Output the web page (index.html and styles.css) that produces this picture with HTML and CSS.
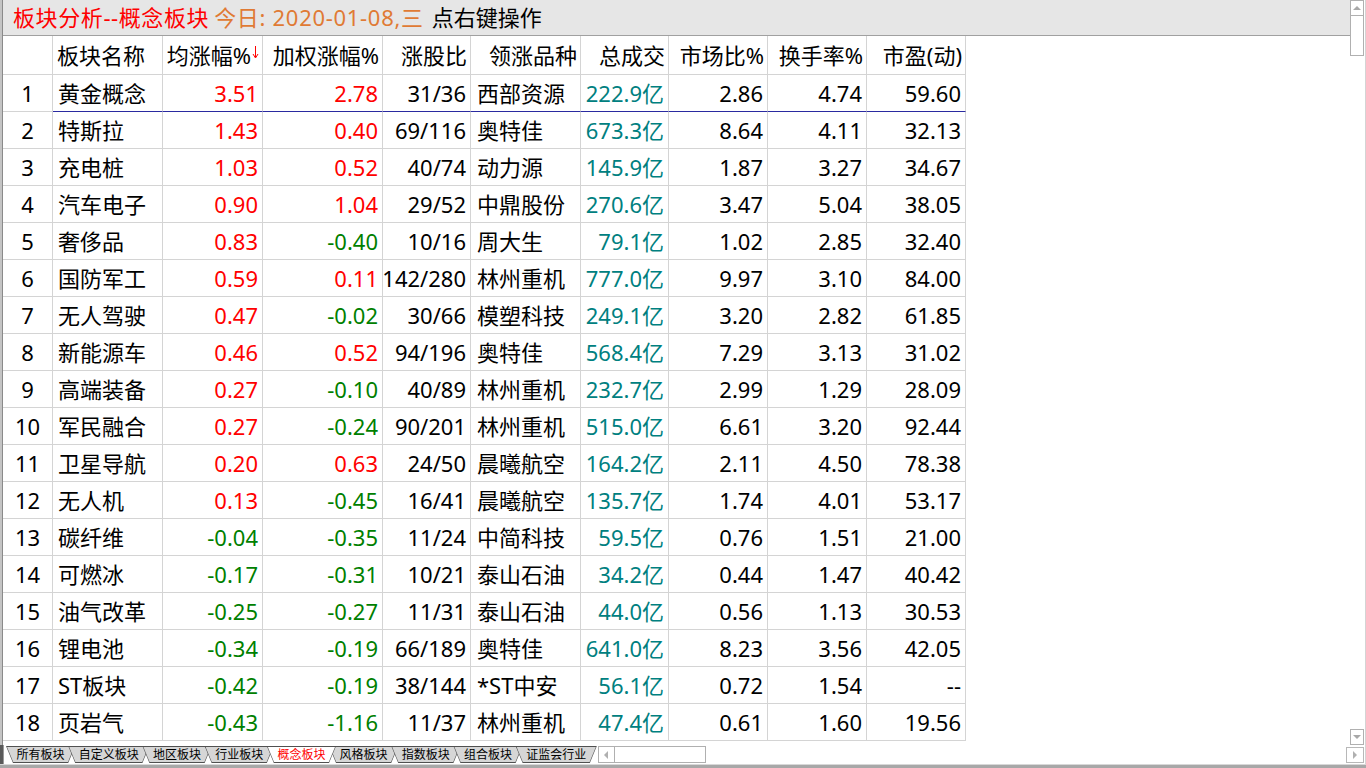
FILE: index.html
```html
<!DOCTYPE html>
<html lang="zh">
<head>
<meta charset="utf-8">
<title>板块分析</title>
<link rel="stylesheet" href="styles.css">
</head>
<body>
<div class="app">
  <div class="top">
    <div class="lframe"></div>
    <div class="content">
      <div class="titlebar">
        <span class="t-red">板块分析--概念板块</span>
        <span class="t-org">今日: 2020-01-08,三</span>
        <span class="t-blk">点右键操作</span>
      </div>
      <div class="grid">
        <div class="hdr">
          <div class="c idx"></div>
          <div class="c name">板块名称</div>
          <div class="c">均涨幅%<svg class="sortarrow" width="7" height="14" viewBox="0 0 7 14"><path d="M3.5 1V12" stroke="#f00" stroke-width="1"/><path d="M1 9L3.5 13L6 9" fill="none" stroke="#f00" stroke-width="1"/></svg></div>
          <div class="c">加权涨幅%</div>
          <div class="c">涨股比</div>
          <div class="c">领涨品种</div>
          <div class="c">总成交</div>
          <div class="c">市场比%</div>
          <div class="c">换手率%</div>
          <div class="c">市盈(动)</div>
        </div>
        <div class="row sel"><div class="c idx">1</div><div class="c name">黄金概念</div><div class="c r">3.51</div><div class="c r">2.78</div><div class="c">31/36</div><div class="c lead">西部资源</div><div class="c t">222.9亿</div><div class="c">2.86</div><div class="c">4.74</div><div class="c">59.60</div></div>
        <div class="row"><div class="c idx">2</div><div class="c name">特斯拉</div><div class="c r">1.43</div><div class="c r">0.40</div><div class="c">69/116</div><div class="c lead">奥特佳</div><div class="c t">673.3亿</div><div class="c">8.64</div><div class="c">4.11</div><div class="c">32.13</div></div>
        <div class="row"><div class="c idx">3</div><div class="c name">充电桩</div><div class="c r">1.03</div><div class="c r">0.52</div><div class="c">40/74</div><div class="c lead">动力源</div><div class="c t">145.9亿</div><div class="c">1.87</div><div class="c">3.27</div><div class="c">34.67</div></div>
        <div class="row"><div class="c idx">4</div><div class="c name">汽车电子</div><div class="c r">0.90</div><div class="c r">1.04</div><div class="c">29/52</div><div class="c lead">中鼎股份</div><div class="c t">270.6亿</div><div class="c">3.47</div><div class="c">5.04</div><div class="c">38.05</div></div>
        <div class="row"><div class="c idx">5</div><div class="c name">奢侈品</div><div class="c r">0.83</div><div class="c g">-0.40</div><div class="c">10/16</div><div class="c lead">周大生</div><div class="c t">79.1亿</div><div class="c">1.02</div><div class="c">2.85</div><div class="c">32.40</div></div>
        <div class="row"><div class="c idx">6</div><div class="c name">国防军工</div><div class="c r">0.59</div><div class="c r">0.11</div><div class="c">142/280</div><div class="c lead">林州重机</div><div class="c t">777.0亿</div><div class="c">9.97</div><div class="c">3.10</div><div class="c">84.00</div></div>
        <div class="row"><div class="c idx">7</div><div class="c name">无人驾驶</div><div class="c r">0.47</div><div class="c g">-0.02</div><div class="c">30/66</div><div class="c lead">模塑科技</div><div class="c t">249.1亿</div><div class="c">3.20</div><div class="c">2.82</div><div class="c">61.85</div></div>
        <div class="row"><div class="c idx">8</div><div class="c name">新能源车</div><div class="c r">0.46</div><div class="c r">0.52</div><div class="c">94/196</div><div class="c lead">奥特佳</div><div class="c t">568.4亿</div><div class="c">7.29</div><div class="c">3.13</div><div class="c">31.02</div></div>
        <div class="row"><div class="c idx">9</div><div class="c name">高端装备</div><div class="c r">0.27</div><div class="c g">-0.10</div><div class="c">40/89</div><div class="c lead">林州重机</div><div class="c t">232.7亿</div><div class="c">2.99</div><div class="c">1.29</div><div class="c">28.09</div></div>
        <div class="row"><div class="c idx">10</div><div class="c name">军民融合</div><div class="c r">0.27</div><div class="c g">-0.24</div><div class="c">90/201</div><div class="c lead">林州重机</div><div class="c t">515.0亿</div><div class="c">6.61</div><div class="c">3.20</div><div class="c">92.44</div></div>
        <div class="row"><div class="c idx">11</div><div class="c name">卫星导航</div><div class="c r">0.20</div><div class="c r">0.63</div><div class="c">24/50</div><div class="c lead">晨曦航空</div><div class="c t">164.2亿</div><div class="c">2.11</div><div class="c">4.50</div><div class="c">78.38</div></div>
        <div class="row"><div class="c idx">12</div><div class="c name">无人机</div><div class="c r">0.13</div><div class="c g">-0.45</div><div class="c">16/41</div><div class="c lead">晨曦航空</div><div class="c t">135.7亿</div><div class="c">1.74</div><div class="c">4.01</div><div class="c">53.17</div></div>
        <div class="row"><div class="c idx">13</div><div class="c name">碳纤维</div><div class="c g">-0.04</div><div class="c g">-0.35</div><div class="c">11/24</div><div class="c lead">中简科技</div><div class="c t">59.5亿</div><div class="c">0.76</div><div class="c">1.51</div><div class="c">21.00</div></div>
        <div class="row"><div class="c idx">14</div><div class="c name">可燃冰</div><div class="c g">-0.17</div><div class="c g">-0.31</div><div class="c">10/21</div><div class="c lead">泰山石油</div><div class="c t">34.2亿</div><div class="c">0.44</div><div class="c">1.47</div><div class="c">40.42</div></div>
        <div class="row"><div class="c idx">15</div><div class="c name">油气改革</div><div class="c g">-0.25</div><div class="c g">-0.27</div><div class="c">11/31</div><div class="c lead">泰山石油</div><div class="c t">44.0亿</div><div class="c">0.56</div><div class="c">1.13</div><div class="c">30.53</div></div>
        <div class="row"><div class="c idx">16</div><div class="c name">锂电池</div><div class="c g">-0.34</div><div class="c g">-0.19</div><div class="c">66/189</div><div class="c lead">奥特佳</div><div class="c t">641.0亿</div><div class="c">8.23</div><div class="c">3.56</div><div class="c">42.05</div></div>
        <div class="row"><div class="c idx">17</div><div class="c name">ST板块</div><div class="c g">-0.42</div><div class="c g">-0.19</div><div class="c">38/144</div><div class="c lead">*ST中安</div><div class="c t">56.1亿</div><div class="c">0.72</div><div class="c">1.54</div><div class="c">--</div></div>
        <div class="row"><div class="c idx">18</div><div class="c name">页岩气</div><div class="c g">-0.43</div><div class="c g">-1.16</div><div class="c">11/37</div><div class="c lead">林州重机</div><div class="c t">47.4亿</div><div class="c">0.61</div><div class="c">1.60</div><div class="c">19.56</div></div>
      </div>
    </div>
    <div class="vscroll">
      <div class="vbtn"><span class="tri-up"></span></div>
      <div class="thumb"></div>
      <div class="track"></div>
      <div class="vbtn"><span class="tri-down"></span></div>
    </div>
    <div class="redge"></div>
  </div>
  <div class="bottom">
    <div class="bl"></div>
    <div class="tabs">
      <div class="tab">所有板块</div>
      <div class="tab">自定义板块</div>
      <div class="tab">地区板块</div>
      <div class="tab">行业板块</div>
      <div class="tab active">概念板块</div>
      <div class="tab">风格板块</div>
      <div class="tab">指数板块</div>
      <div class="tab">组合板块</div>
      <div class="tab">证监会行业</div>
    </div>
    <div class="hscroll">
      <div class="hbtn"><span class="tri-left"></span></div>
    </div>
    <div class="spacer"></div>
    <div class="rbtn"><span class="tri-right"></span></div>
    <div class="redge2"></div>
  </div>
  <div class="strip"></div>
</div>
</body>
</html>
```
FILE: styles.css
```css
* { box-sizing: border-box; margin: 0; padding: 0; }
html, body { width: 1366px; height: 768px; overflow: hidden; background: #fff; }
body { font-family: "Noto Sans", "Noto Sans CJK SC", sans-serif; color: #000; }

.app { display: flex; flex-direction: column; height: 768px; }
.top { display: flex; height: 745px; }
.lframe { width: 3px; background: #c4c4c4; border-right: 1px solid #8a8a8a; }
.content { flex: 1; display: flex; flex-direction: column; min-width: 0; }

.titlebar {
  height: 36px; background: #e6e6e6; border-bottom: 1px solid #a0a0a0;
  display: flex; align-items: center; padding-left: 10px; padding-bottom: 1px;
  font-size: 22px; white-space: nowrap; line-height: 1;
}
.t-red { color: #f00; letter-spacing: 0.6px; }
.t-org { color: #e07a34; margin-left: 5px; letter-spacing: 0.7px; }
.t-blk { color: #000; margin-left: 8px; }

.grid { width: 963px; }
.hdr, .row {
  display: grid;
  grid-template-columns: 50px 110px 100px 120px 88px 110px 88px 99px 99px 99px;
}
.hdr { height: 39px; }
.row { height: 37px; }
.c {
  border-right: 1px solid #d4d4d4; border-bottom: 1px solid #d4d4d4;
  display: flex; align-items: center; justify-content: flex-end;
  padding-right: 4px;
  font-size: 22px; line-height: 1; white-space: nowrap;
}
.hdr .c { padding-right: 3px; padding-bottom: 1px; }
.c.idx { justify-content: center; padding-right: 0; }
.c.name { justify-content: flex-start; padding-left: 5px; }
.hdr .c.name { padding-left: 4px; }
.c.lead { justify-content: flex-start; padding-left: 6px; }
.sel .c:not(.idx) { border-bottom-color: #2a2aa0; }
.r { color: #f00; }
.g { color: #008000; }
.t { color: #008080; }
.sortarrow { align-self: flex-start; margin-top: 9px; margin-left: 1px; }

.vscroll { width: 14px; display: flex; flex-direction: column; }
.vbtn {
  height: 16px; border: 1px solid #b0b0b0; background: #fff;
  display: flex; align-items: center; justify-content: center;
}
.thumb { height: 40px; border: 1px solid #b0b0b0; border-top: none; }
.track { flex: 1; }
.tri-up { width: 0; height: 0; border-left: 4px solid transparent; border-right: 4px solid transparent; border-bottom: 4px solid #a8a8a8; }
.tri-down { width: 0; height: 0; border-left: 4px solid transparent; border-right: 4px solid transparent; border-top: 4px solid #a8a8a8; }
.tri-left { width: 0; height: 0; border-top: 4px solid transparent; border-bottom: 4px solid transparent; border-right: 4px solid #b0b0b0; }
.tri-right { width: 0; height: 0; border-top: 4px solid transparent; border-bottom: 4px solid transparent; border-left: 4px solid #b0b0b0; }
.redge { width: 2px; border-right: 1px solid #d4d4d4; }

.bottom { height: 19px; display: flex; align-items: flex-start; }
.bl { width: 4px; height: 19px; background: #5a5a5a; border-right: 1px solid #9a9a9a; }
.tabs { display: flex; margin-top: 1px; padding-left: 2px; }
.tab {
  position: relative; isolation: isolate;
  height: 17px; padding: 0 10.6px; margin-left: -7px;
  font-size: 12px; line-height: 17px; white-space: nowrap; color: #000;
}
.tab:first-child { margin-left: 0; }
.tab::before, .tab::after { content: ""; position: absolute; z-index: -1; }
.tab::before {
  inset: 0; background: #505050;
  clip-path: polygon(0 0, 100% 0, calc(100% - 7px) 100%, 7px 100%);
}
.tab::after {
  inset: 1px 1px 1px 1px; background: #d6d6d6;
  clip-path: polygon(0 0, 100% 0, calc(100% - 6.2px) 100%, 6.2px 100%);
}
.tab.active { z-index: 5; color: #f00; }
.tab.active::after { background: #fff; }

.hscroll {
  margin-left: 1px; margin-top: 1px; width: 108px; height: 17px;
  border: 1px solid #b0b0b0; display: flex;
}
.hbtn { width: 16px; border-right: 1px solid #b0b0b0; display: flex; align-items: center; justify-content: center; }
.spacer { flex: 1; }
.rbtn {
  width: 18px; height: 16px; margin-top: 2px; border: 1px solid #b8b8b8;
  display: flex; align-items: center; justify-content: center;
}
.redge2 { width: 2px; height: 19px; border-right: 1px solid #d4d4d4; }
.strip { height: 4px; background: #a8a8a8; border-top: 1px solid #d8d8d8; }
```
